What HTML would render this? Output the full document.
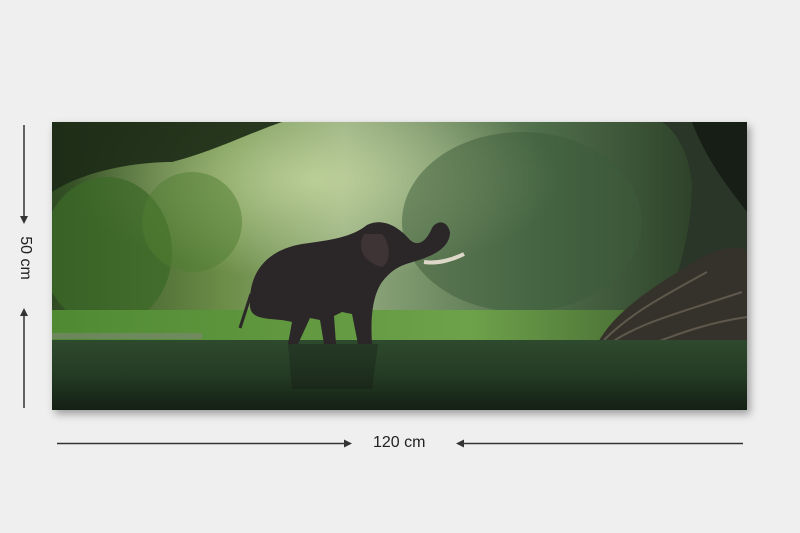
<!DOCTYPE html>
<html><head><style>
html,body{margin:0;padding:0}
body{width:800px;height:533px;background:#efefef;position:relative;overflow:hidden;font-family:"Liberation Sans",sans-serif}
.canvas{position:absolute;left:52px;top:122px;width:695px;height:288px;box-shadow:3px 4px 8px rgba(0,0,0,.35)}
.lbl{position:absolute;color:#222;font-size:16px}
</style></head><body>
<div class="canvas">
<svg width="695" height="288" viewBox="0 0 695 288">
<defs>
<linearGradient id="sky" x1="0" y1="0" x2="1" y2="0">
<stop offset="0" stop-color="#2f4a22"/>
<stop offset=".25" stop-color="#6c8e48"/>
<stop offset=".42" stop-color="#93aa7e"/>
<stop offset=".7" stop-color="#4f6e4a"/>
<stop offset="1" stop-color="#23331f"/>
</linearGradient>
<radialGradient id="glow" cx=".38" cy=".2" r=".35">
<stop offset="0" stop-color="#cfe0a8" stop-opacity=".7"/>
<stop offset="1" stop-color="#cfe0a8" stop-opacity="0"/>
</radialGradient>
<linearGradient id="water" x1="0" y1="0" x2="0" y2="1">
<stop offset="0" stop-color="#2e4a2e"/>
<stop offset=".5" stop-color="#243b24"/>
<stop offset="1" stop-color="#142014"/>
</linearGradient>
<linearGradient id="grass" x1="0" y1="0" x2="1" y2="0">
<stop offset="0" stop-color="#4f8a32"/>
<stop offset=".6" stop-color="#6ea24a"/>
<stop offset="1" stop-color="#34502a"/>
</linearGradient>
</defs>
<rect width="695" height="288" fill="url(#sky)"/>
<rect width="695" height="288" fill="url(#glow)"/>
<path d="M0 0H230C200 10 160 30 120 40 80 40 30 50 0 70Z" fill="#1c2a16" opacity=".9"/>
<ellipse cx="55" cy="130" rx="65" ry="75" fill="#3c6a28" opacity=".75"/>
<ellipse cx="140" cy="100" rx="50" ry="50" fill="#4f7e32" opacity=".5"/>
<ellipse cx="470" cy="100" rx="120" ry="90" fill="#3c5c3a" opacity=".5"/>
<path d="M610 0H695V230H590C620 180 640 120 640 60 636 30 625 10 610 0Z" fill="#2a3628"/>
<path d="M640 0H695V90C680 70 655 40 640 0Z" fill="#161e15"/>
<rect x="0" y="188" width="695" height="32" fill="url(#grass)"/>
<path d="M545 222C565 185 610 160 650 135 675 122 695 125 695 130V225Z" fill="#35322b"/>
<path d="M552 218C580 190 615 172 655 150M560 220C590 200 630 190 690 170M600 222C630 210 660 200 695 195" stroke="#5e594c" stroke-width="2" fill="none"/>
<rect x="0" y="218" width="695" height="70" fill="url(#water)"/>
<rect x="0" y="211" width="150" height="6" fill="#7f8676" opacity=".6"/>
<g fill="#2b2627">
<path d="M198 185C196 150 215 128 250 122 280 118 300 115 315 103 330 96 345 103 358 118 366 125 374 120 380 106 385 98 395 98 398 110 398 122 388 130 375 135 360 142 345 140 330 160 322 172 318 190 320 222H306L300 192 290 190 282 194 284 222H272L268 198 258 196 246 222H236L240 200C222 195 200 200 198 185Z"/>
</g>
<path d="M199 172 188 206" stroke="#2b2627" stroke-width="3"/>
<path d="M312 112C305 125 310 140 330 145 340 140 338 120 330 112Z" fill="#3e3436"/>
<path d="M372 140C385 142 400 138 412 132" stroke="#ddd8c8" stroke-width="4" fill="none"/>
<path d="M236 222h90l-6 45h-80z" fill="#151515" opacity=".3"/>
</svg>
</div>
<svg style="position:absolute;left:0;top:0" width="800" height="533">
<g stroke="#333" stroke-width="1.5" fill="#333">
<line x1="24" y1="125" x2="24" y2="218"/><path d="M20 216L24 224L28 216Z" stroke="none"/>
<line x1="24" y1="314" x2="24" y2="408"/><path d="M20 316L24 308L28 316Z" stroke="none"/>
<line x1="57" y1="443.5" x2="346" y2="443.5"/><path d="M344 439.5L352 443.5L344 447.5Z" stroke="none"/>
<line x1="462" y1="443.5" x2="743" y2="443.5"/><path d="M464 439.5L456 443.5L464 447.5Z" stroke="none"/>
</g>
</svg>
<div class="lbl" style="left:373px;top:434px">120 cm</div>
<div class="lbl" style="left:3px;top:249px;transform:rotate(90deg);transform-origin:center;width:44px;text-align:center">50 cm</div>
</body></html>
